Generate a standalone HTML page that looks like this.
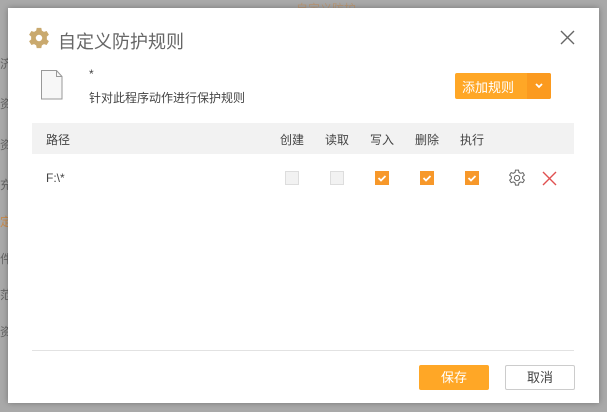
<!DOCTYPE html>
<html><head><meta charset="utf-8"><style>
body{margin:0;width:607px;height:412px;background:#a9a9a9;position:relative;overflow:hidden;font-family:"Liberation Sans","Noto Sans CJK SC",sans-serif;}
.a{position:absolute}
.dlg{left:8px;top:8px;width:591px;height:395px;background:#fff;box-shadow:0 0 6px rgba(0,0,0,.3)}
.t{font-size:12px;color:#444;white-space:nowrap}
.cb{width:12px;height:12px;border:1px solid #ddd;background:#f2f2f2}
.ck{width:14px;height:14px;background:#f7982a}
</style></head><body>
<div class="a t" style="left:296px;top:0;color:#c98a4a;opacity:.5">自定义防护</div>
<div class="a t" style="left:0;top:55px;color:#666">济</div>
<div class="a t" style="left:0;top:95px;color:#666">资</div>
<div class="a t" style="left:0;top:136px;color:#666">资</div>
<div class="a t" style="left:0;top:176px;color:#666">充</div>
<div class="a t" style="left:0;top:213px;color:#c98a4a">定</div>
<div class="a t" style="left:0;top:250px;color:#666">件</div>
<div class="a t" style="left:0;top:286px;color:#666">范</div>
<div class="a t" style="left:0;top:323px;color:#666">资</div>
<div class="a dlg"></div>
<svg class="a" style="left:28px;top:27px" width="22" height="22" viewBox="0 0 24 24"><path fill="#c9a96e" d="M9.5 1h5l.6 3 2.3 1.3 2.9-1 2.5 4.2-2.3 2q.2 1.5 0 3l2.3 2-2.5 4.2-2.9-1-2.3 1.3-.6 3h-5l-.6-3-2.3-1.3-2.9 1-2.5-4.2 2.3-2q-.2-1.5 0-3l-2.3-2 2.5-4.2 2.9 1L8.9 4zM12 8.5a3.5 3.5 0 1 0 0 7 3.5 3.5 0 1 0 0-7z"/></svg>
<div class="a" style="left:58px;top:28px;font-size:18px;color:#666">自定义防护规则</div>
<svg class="a" style="left:560px;top:30px" width="15" height="15"><path d="M1 1L14 14M14 1L1 14" stroke="#666" stroke-width="1.4"/></svg>
<svg class="a" style="left:41px;top:70px" width="22" height="30"><path d="M.5 .5h15l5.5 6v22.5h-20.5z" fill="#f7f7f7" stroke="#999"/><path d="M15.5 .5v6h5.5" fill="none" stroke="#999"/></svg>
<div class="a t" style="left:89px;top:67px">*</div>
<div class="a t" style="left:89px;top:89px">针对此程序动作进行保护规则</div>
<div class="a" style="left:455px;top:73px;width:96px;height:26px;background:#ffa726;border-radius:2px"></div>
<div class="a" style="left:527px;top:73px;width:24px;height:26px;background:#fb9a1f;border-radius:0 2px 2px 0"></div>
<div class="a" style="left:462px;top:77px;font-size:13px;color:#fff">添加规则</div>
<svg class="a" style="left:535px;top:83px" width="8" height="6"><path d="M1 1l3 3 3-3" stroke="#fff" stroke-width="1.8" fill="none"/></svg>
<div class="a" style="left:32px;top:123px;width:542px;height:31px;background:#f2f2f2"></div>
<div class="a t" style="left:46px;top:131px">路径</div>
<div class="a t" style="left:280px;top:131px">创建</div>
<div class="a t" style="left:325px;top:131px">读取</div>
<div class="a t" style="left:370px;top:131px">写入</div>
<div class="a t" style="left:415px;top:131px">删除</div>
<div class="a t" style="left:460px;top:131px">执行</div>
<div class="a t" style="left:46px;top:171px">F:\*</div>
<div class="a cb" style="left:285px;top:171px"></div>
<div class="a cb" style="left:330px;top:171px"></div>
<svg class="a ck" style="left:375px;top:171px" width="14" height="14"><path d="M3.5 7l2.5 2.5 4.5-4.5" stroke="#fff" stroke-width="1.8" fill="none"/></svg>
<svg class="a ck" style="left:420px;top:171px" width="14" height="14"><path d="M3.5 7l2.5 2.5 4.5-4.5" stroke="#fff" stroke-width="1.8" fill="none"/></svg>
<svg class="a ck" style="left:465px;top:171px" width="14" height="14"><path d="M3.5 7l2.5 2.5 4.5-4.5" stroke="#fff" stroke-width="1.8" fill="none"/></svg>
<svg class="a" style="left:508px;top:169px" width="18" height="18" viewBox="0 0 24 24"><path fill="none" stroke="#666" stroke-width="1.4" d="M10 1.5h4l.6 3 2.3 1.3 2.9-1 2 3.4-2.3 2q.2 1.3 0 2.6l2.3 2-2 3.4-2.9-1-2.3 1.3-.6 3h-4l-.6-3-2.3-1.3-2.9 1-2-3.4 2.3-2q-.2-1.3 0-2.6l-2.3-2 2-3.4 2.9 1L9.4 4.5z"/><circle cx="12" cy="12" r="3.5" fill="none" stroke="#666" stroke-width="1.4"/></svg>
<svg class="a" style="left:542px;top:171px" width="15" height="15"><path d="M1 1L14 14M14 1L1 14" stroke="#e05050" stroke-width="1.4"/></svg>
<div class="a" style="left:32px;top:350px;width:542px;height:1px;background:#e2e2e2"></div>
<div class="a" style="left:419px;top:365px;width:70px;height:25px;background:#ffa726;border-radius:2px;color:#fff;font-size:13px;text-align:center;line-height:25px">保存</div>
<div class="a" style="left:505px;top:365px;width:68px;height:23px;border:1px solid #ccc;border-radius:2px;color:#444;font-size:13px;text-align:center;line-height:23px">取消</div>
</body></html>
